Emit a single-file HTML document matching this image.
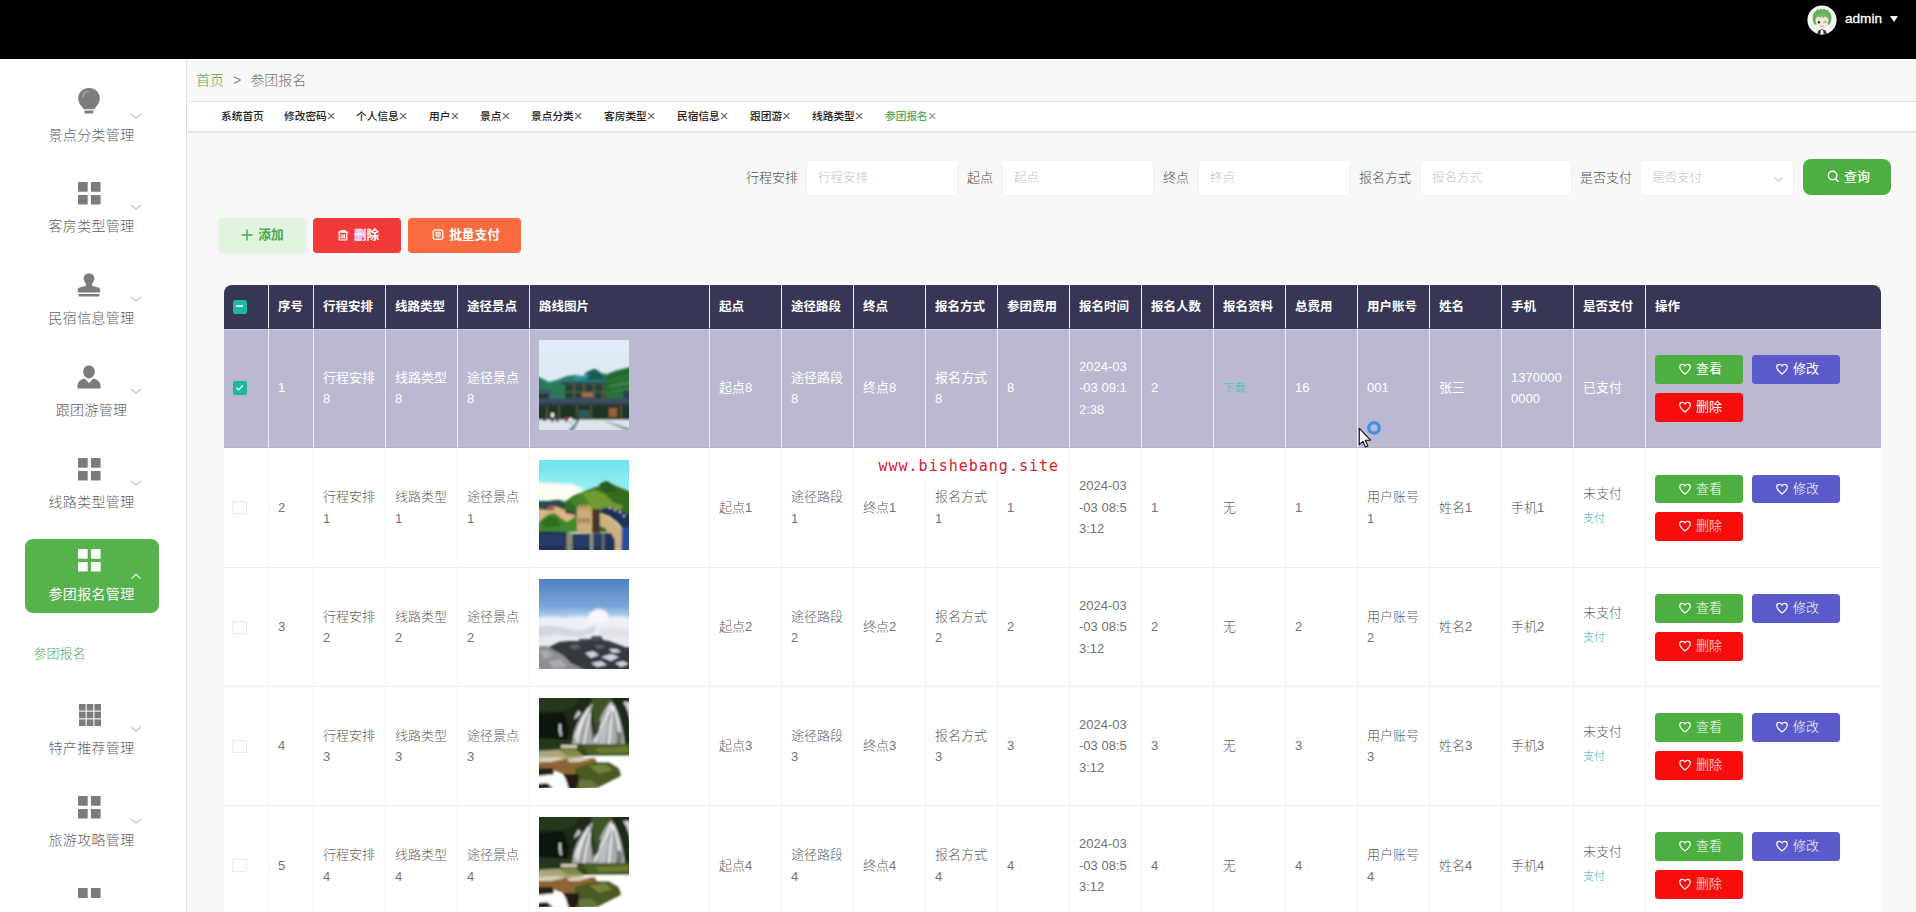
<!DOCTYPE html>
<html lang="zh-CN">
<head>
<meta charset="utf-8">
<title>参团报名</title>
<style>
*{box-sizing:border-box;margin:0;padding:0}
html,body{width:1916px;height:912px;overflow:hidden;background:#f8f8f8}
body{font-family:"Liberation Sans","Noto Sans CJK SC",sans-serif;font-size:13px;color:#606266;position:relative}
.hdr{position:absolute;left:0;top:0;width:1916px;height:59px;background:#000}
.ava{position:absolute;left:1807px;top:5px;width:30px;height:30px}
.adm{position:absolute;left:1845px;top:10px;color:#fff;font-size:13.6px;line-height:18px;-webkit-text-stroke:.3px #fff}
.tri{position:absolute;left:1889.5px;top:16px;width:0;height:0;border-left:4.5px solid transparent;border-right:4.5px solid transparent;border-top:6.5px solid #fff}
.side{position:absolute;left:0;top:59px;width:187px;height:853px;background:#fff;border-right:1px solid #e4e4e4}
.side .ic{position:absolute;margin-top:-59px}
.slabel{position:absolute;left:0;width:183px;text-align:center;font-size:14px;line-height:20px;color:#626262;font-weight:300;margin-top:-59px;letter-spacing:.35px}
.slabel.act{color:#fff;font-weight:400}
.actbox{position:absolute;left:25px;top:480px;width:134px;height:74px;background:#56b24c;border-radius:8px}
.chev{position:absolute;left:130px;width:12px;height:6px;margin-top:-59px}
.subitem{position:absolute;left:33.5px;font-size:13px;line-height:18px;color:#52ab4e;font-weight:300;margin-top:-59px}
.main{position:absolute;left:0;top:0;width:1916px;height:912px;pointer-events:none}
.bc{position:absolute;left:196px;top:70px;font-size:14px;line-height:20px;color:#747474;font-weight:300}
.bc .g{color:#4fa64f}
.bc .sep{margin:0 9px 0 9px;color:#888}
.tabs{position:absolute;left:187px;top:101px;width:1729px;height:30px;background:#fff;border-top:1px solid #e6e6e6;box-shadow:0 1px 2px rgba(0,0,0,.16)}
.tab{position:absolute;top:-1px;margin-left:4px;line-height:30px;font-size:10.7px;color:#222;white-space:nowrap;font-weight:500}
.tab i{font-style:normal;color:#666;font-weight:400;font-size:15px;margin-left:0;vertical-align:-1px;line-height:10px}
.tab.cur{color:#55a955}
.tab.cur i{color:#999}
.form{position:absolute;left:0;top:0}
.form label{position:absolute;top:160px;line-height:35px;font-size:13px;color:#4f4f4f;font-weight:300;white-space:nowrap}
.inp{position:absolute;top:161px;height:34px;background:#fff;border-radius:4px;color:#bfc1c7;font-weight:300;font-size:12.5px;line-height:34px;padding-left:11px;box-shadow:0 0 3px rgba(0,0,0,.06)}
.inp .sel{position:absolute;right:9px;top:15px;width:11px;height:7px}
.qbtn{position:absolute;left:1803px;top:159px;width:88px;height:36px;padding-left:3px;background:#4caf40;border-radius:8px;color:#fff;font-size:13px;line-height:35px;text-align:center;font-weight:500}
.qbtn svg{width:13px;height:13px;vertical-align:-2px;margin-right:4px}
.btn{position:absolute;top:218px;height:35px;border-radius:4px;color:#fff;font-size:12.7px;font-weight:700;line-height:34px;text-align:center;white-space:nowrap}
.btn svg{width:12px;height:12px;vertical-align:-1.5px;margin-right:5px}
.btn.add{left:219px;width:87px;background:#e2f3df;color:#4aa54a;box-shadow:0 0 4px rgba(0,0,0,.05)}
.btn.del{left:313px;width:88px;background:#f23a3a;padding-left:2px}
.btn.pay{left:408px;width:113px;background:#f96a3f;padding-left:3px}
.tw{position:absolute;left:224px;top:285px;width:1657px;height:640px;border-radius:8px 8px 0 0;overflow:hidden;background:#fff}
.tb{border-collapse:separate;border-spacing:0;table-layout:fixed;width:1657px}
.tb th{height:44px;background:#373655;color:#fff;font-size:12.5px;font-weight:700;text-align:left;border-right:1px solid #ebebf3;border-bottom:1px solid #373655;vertical-align:middle}
.tb th:last-child,.tb td:last-child{border-right:none}
.tb td{font-weight:300;border-right:1px solid #f4f4f6;border-bottom:1px solid #eeeeef;vertical-align:middle;color:#5e5e5e;font-size:13px}
.tb .c{padding:0 9px;line-height:21.5px;white-space:nowrap}
.tb th .c{line-height:20px}
.tb tr.sel td{background:#bab9d1;color:#fff;font-weight:400;box-shadow:inset 0 1px 0 #cbcae2;border-right-color:#eeeefc;border-bottom-color:#b3b2c9}
.cb{display:block;width:15px;height:13px;border:1px solid #e9e9ee;background:#fff;border-radius:1px;margin-left:8px}
.cb.ind,.cb.chk{width:14px;height:14px;margin-left:9px;border-radius:2px}
.cb.ind,.cb.chk{background:#1cb99a;border-color:#1cb99a;position:relative}
.cb.ind:after{content:"";position:absolute;left:2px;top:4.5px;width:7px;height:2px;background:#d8fff6}
.cb.chk svg{display:block;width:11px;height:11px}
.pic{display:block;width:90px;height:90px;margin-left:9px}
.tb td.imc{vertical-align:top;padding-top:11px}
.tb tr.r2 td.imc{padding-top:12px}
.tb td.opc{vertical-align:top;padding-top:26px}
.tb tr.r2 td.opc{padding-top:27px}
.tb tr.r2 .ob.g,.tb tr.r2 .ob.p{height:28px;line-height:27px}
.dl{color:#2fc7a6;font-size:11.5px;font-weight:300}
.pl{color:#2cb7a0;font-size:11px}
.c.pay{line-height:24px;margin-top:-4px}
.ops{padding-left:9px;width:235px;font-size:0;margin-top:0px}
.ob{display:inline-block;width:88px;height:29px;border-radius:3.5px;padding-left:2px;color:#fff;font-size:13px;line-height:28px;text-align:center;margin:0 9px 9px 0;vertical-align:top}
.ob .hrt{width:14px;height:14px;vertical-align:-2.5px;margin-right:4px}
.ob.g{background:#4caf40}
.ob.p{background:#5a5acb}
.ob.r{background:#f80d0d;margin-bottom:0}
.wm{position:absolute;left:872px;top:452.5px;padding:3px 6px 3px 6.5px;background:#fff;font-family:"DejaVu Sans Mono","Liberation Mono",monospace;font-size:15px;line-height:20px;color:#d42030;letter-spacing:1px;white-space:nowrap}
.cursor{position:absolute;left:1355px;top:418px;width:30px;height:30px}
.tb td .n{color:#727272}
.tb tr.sel td .n{color:#fff}

</style>
</head>
<body>
<svg width="0" height="0" style="position:absolute">
<defs>
<filter id="bl" filterUnits="userSpaceOnUse" x="-10" y="-10" width="110" height="110"><feGaussianBlur stdDeviation="0.9"/></filter>
<filter id="bl2" filterUnits="userSpaceOnUse" x="-10" y="-10" width="110" height="110"><feGaussianBlur stdDeviation="1.6"/></filter>
<clipPath id="cp"><rect width="90" height="90"/></clipPath>
<linearGradient id="sky1" x1="0" y1="0" x2="0" y2="1"><stop offset="0" stop-color="#e3ecf5"/><stop offset="1" stop-color="#cfe4ee"/></linearGradient>
<linearGradient id="sky2" x1="0" y1="0" x2="0" y2="1"><stop offset="0" stop-color="#6fe4ee"/><stop offset=".55" stop-color="#b5f3f1"/><stop offset="1" stop-color="#f4fbf2"/></linearGradient>
<linearGradient id="sky3" x1="0" y1="0" x2="0" y2="1"><stop offset="0" stop-color="#4f80be"/><stop offset=".3" stop-color="#7aa5d8"/><stop offset=".43" stop-color="#b6d4f1"/><stop offset="1" stop-color="#b6d4f1"/></linearGradient>
<g id="img1" clip-path="url(#cp)">
<rect width="90" height="90" fill="url(#sky1)"/>
<g filter="url(#bl)">
<path d="M-2 36 L4 39 L10 42 L18 40 L28 36 L36 35 L44 36 L50 31 L56 29 L62 33 L68 34 L76 31 L92 27 L92 80 L-2 80 Z" fill="#2a7d6e"/>
<path d="M46 33 L52 30 L56 29 L62 33 L66 40 L46 40 Z" fill="#1c5a58"/><path d="M36 36 L44 36 L50 33 L48 39 L36 40 Z" fill="#2f98a4"/>
<path d="M66 36 L76 31 L92 27 L92 62 L66 62 Z" fill="#2a7236"/>
<path d="M70 42 L92 36 L92 50 L72 52 Z" fill="#33803e"/><path d="M68 38 L92 30 M68 44 L92 38 M68 50 L92 46" stroke="#1f5a2c" stroke-width="1.4"/>
<path d="M-2 38 L8 43 L12 52 L-2 52 Z" fill="#2a7a5a"/>
<path d="M12 46 L26 40 L30 56 L12 56 Z" fill="#2b7a50"/>
<rect x="-2" y="49" width="14" height="6" fill="#3a5668"/>
<rect x="-2" y="54" width="12" height="8" fill="#23332c"/>
<path d="M22 42 L68 42 L66 45 L24 45 Z" fill="#2d4c55"/>
<rect x="26" y="45" width="40" height="15" fill="#26402f"/>
<rect x="26" y="51" width="40" height="2" fill="#3b5a52"/>
<rect x="43" y="53" width="11" height="4" fill="#b56a44"/>
<path d="M35 44 V60 M45 44 V60 M55 44 V60 M64 44 V60" stroke="#8a6a48" stroke-width="1"/>
<rect x="84" y="50" width="8" height="8" fill="#2d4250"/>
<path d="M-2 58 L92 58 L92 64 L-2 64 Z" fill="#3a4e63"/>
<rect x="-2" y="63.5" width="94" height="3" fill="#2b3a34"/>
<rect x="-2" y="66" width="94" height="14" fill="#1c3424"/>
<path d="M8 66 V79 M20 66 V79 M38 66 V79 M52 66 V79 M82 66 V79" stroke="#7a6a46" stroke-width="1.1"/>
<rect x="70" y="68" width="8" height="9" fill="#9a5e30"/>
<rect x="40" y="70" width="10" height="8" fill="#2d5a5a"/>
<rect x="-2" y="79.5" width="94" height="12" fill="#dde4ea"/>
<path d="M28 92 L38 80.5 L40 81 L34 92 Z" fill="#5a8ea0"/>
<path d="M62 79.5 L92 89 L92 91 L86 90 Z" fill="#7f8a94"/>
<path d="M4 76 h3 v5 h-3 Z M12 74 h2.6 v8 h-2.6 Z M17 75 h2.4 v7 h-2.4 Z M26 76 h2.4 v6 h-2.4 Z M30 77 h2.6 v6 h-2.6 Z M37 76 h2.6 v5 h-2.6 Z" fill="#3a3340"/>
<rect x="12" y="73" width="3" height="4" fill="#f2f2f2"/><rect x="30" y="78" width="3" height="4" fill="#eee"/><rect x="26" y="77" width="2" height="4" fill="#a02030"/>
</g></g>
<g id="img2" clip-path="url(#cp)">
<rect width="90" height="90" fill="url(#sky2)"/>
<path d="M-4 22 L34 24 L46 30 L30 40 L-4 42 Z" fill="#fdfcf2" filter="url(#bl2)"/>
<g filter="url(#bl)">
<path d="M-2 41 L10 41 L20 40 L26 42 L34 36 L44 32 L54 28 L60 26 L64 22 L68 21 L72 24 L80 27 L92 32 L92 72 L-2 72 Z" fill="#356c22"/>
<path d="M40 34 L56 30 L66 34 L74 42 L84 46 L80 52 L60 50 L44 46 Z" fill="#6f9a32"/>
<path d="M60 24 L68 21 L74 25 L78 32 L66 32 Z" fill="#2a5a1c"/>
<path d="M30 40 L44 34 L50 44 L38 48 Z" fill="#4b8429"/>
<path d="M-2 41 L10 41 L20 40 L27 44 L24 50 L-2 50 Z" fill="#2d4a4a"/>
<path d="M-2 49 L8 50 L12 46 L18 47 L26 50 L36 53 L36 66 L-2 62 Z" fill="#dcb684"/>
<path d="M8 47 L14 45 L16 50 L9 51 Z" fill="#a85a4a"/>
<path d="M26 50 L36 52 L36 55 L26 53 Z" fill="#3a3a4a"/>
<rect x="38" y="47" width="15" height="26" fill="#cdac7a"/>
<path d="M38 47 h2 v-2 h2 v2 h2 v-2 h2 v2 h2 v-2 h2 v2 h3 v3 h-15 Z" fill="#bfa070"/>
<path d="M41 58 v5 M45 58 v5 M49 58 v5" stroke="#3a2e22" stroke-width="1.2"/>
<rect x="53" y="49" width="8" height="24" fill="#4a3426"/>
<path d="M61 54 L70 57 L78 63 L83 72 L82 92 L74 92 L72 76 L66 68 L61 66 Z" fill="#cfb080"/>
<path d="M61 54 L70 57 L78 63 L83 70" stroke="#e8d2a8" stroke-width="1.6" fill="none"/>
<path d="M62 49 L70 47 L80 50 L92 56 L92 68 L84 68 L78 62 L70 56 L62 53 Z" fill="#1f2f5a"/>
<path d="M70 48 l2 0 M75 50 l2 0 M80 52 l2 0 M84 56 l2 0" stroke="#dfe6f2" stroke-width="1.4"/>
<path d="M83 68 L92 66 L92 92 L82 92 Z" fill="#27509e"/>
<path d="M-2 64 L4 58 L10 54 L16 53 L22 58 L28 62 L34 58 L37 56 L38 72 L-2 72 Z" fill="#3f8a2c"/>
<path d="M2 62 L10 56 L18 58 L22 66 L6 68 Z" fill="#2f6e24"/>
<path d="M-2 71 L28 72 L34 74 L72 73 L76 80 L76 92 L-2 92 Z" fill="#1e3159"/>
<path d="M0 76 h24 M0 80 h26 M0 84 h24 M36 77 h30 M36 81 h32 M36 85 h30" stroke="#3d5a8c" stroke-width="1"/>
<rect x="27.5" y="73" width="6" height="19" fill="#8d8c6a"/>
<rect x="51" y="74" width="3" height="18" fill="#9a927a"/>
<rect x="63" y="74" width="2.4" height="18" fill="#6a6a72"/>
</g></g>
<g id="img3" clip-path="url(#cp)">
<rect width="90" height="90" fill="url(#sky3)"/>
<g filter="url(#bl2)">
<path d="M-4 40 Q10 36 24 39 Q38 36 50 38 Q54 28 62 30 Q68 31 70 38 Q82 36 94 40 L94 70 L-4 70 Z" fill="#eef0f5"/>
<path d="M-4 48 Q14 44 30 50 Q44 54 56 46 L56 54 Q40 60 20 56 L-4 58 Z" fill="#d3d6de"/>
<path d="M50 34 Q60 29 68 34 L70 42 L48 44 Z" fill="#f6f7f9"/>
<path d="M60 50 Q76 46 94 52 L94 62 L60 62 Z" fill="#e0e2e8"/>
<path d="M-4 58 L94 58 L94 70 L-4 70 Z" fill="#e7e9ee"/>
</g>
<g filter="url(#bl)">
<path d="M-2 69 L4 67 L10 68 L14 66 L20 63 L30 62 L40 62 L44 60 L52 60 L53 57 L62 57 L64 61 L70 62 L78 65 L86 68 L92 69 L92 92 L-2 92 Z" fill="#34373d"/>
<path d="M-2 69 L4 67 L10 68 L16 72 L24 76 L32 84 L40 88 L48 92 L-2 92 Z" fill="#8b8e92"/>
<path d="M0 72 L8 71 L14 76 L6 80 Z M10 82 L22 80 L28 88 L14 90 Z" fill="#a9abae"/>
<path d="M53 57 h9 v4 h-9 Z" fill="#4a5663"/>
<path d="M40 60 h8 v3 h-8 Z" fill="#454b55"/>
<path d="M46 74 l8 -2 l6 4 l-8 3 Z M62 78 l10 -3 l8 3 l-8 4 Z M70 70 l8 0 l4 3 l-8 1 Z M52 84 l10 -2 l6 4 l-10 2 Z M76 84 l8 -2 l6 3 l-8 3 Z" fill="#cfd3da"/>
<path d="M30 66 l8 -1 l4 4 l-8 2 Z M56 66 l8 0 l2 3 l-8 1 Z" fill="#5c6068"/>
</g></g>
<g id="img4" clip-path="url(#cp)">
<rect width="90" height="90" fill="#fff"/>
<g filter="url(#bl)">
<rect x="-2" y="-2" width="94" height="52" fill="#1d2b19"/>
<path d="M-2 -2 L40 -2 L36 8 L20 14 L-2 12 Z" fill="#27391f"/>
<path d="M-2 16 L24 14 L30 30 L28 42 L-2 42 Z" fill="#0f150e"/>
<path d="M52 -2 L72 -2 L74 6 L70 16 L62 28 L56 30 L54 16 Z" fill="#3c5528"/>
<path d="M52 6 Q40 18 35 34 L33 46 L53 47 Q54 36 52 26 Q51 14 54 6 Z" fill="#a6a8aa"/><path d="M50 10 Q42 24 38 44 M51 16 Q47 30 45 46 M46 16 Q40 28 36 40" stroke="#eeeeef" stroke-width="1.6" fill="none"/><path d="M49 18 Q45 30 42 46" stroke="#8d8f90" stroke-width="1.2" fill="none"/>
<path d="M40 12 Q36 16 35 22 L42 16 Z" fill="#c0c2c4"/>
<path d="M72 3 Q62 14 58 30 Q54 38 52 47 L86 47 Q84 30 80 18 Q77 8 72 3 Z" fill="#a9abad"/><path d="M72 6 Q66 20 62 44 M73 8 Q72 26 70 46 M74 8 Q80 24 82 44 M70 14 Q62 28 56 44" stroke="#f0f0f1" stroke-width="1.8" fill="none"/><path d="M72 14 Q69 30 66 46 M75 14 Q78 30 78 46" stroke="#909294" stroke-width="1.3" fill="none"/>
<path d="M66 22 Q60 34 60 46 L66 46 Q68 34 70 26 Z" fill="#b9bcc0"/>
<path d="M78 34 Q80 40 76 47 L82 47 Q84 40 82 34 Z" fill="#6e7a6a"/>
<path d="M84 4 Q90 12 92 28 L92 4 Z" fill="#cfd1d3"/>
<path d="M20 26 Q19 32 21 38 L23 38 Q22 32 22 26 Z" fill="#c9cbcc"/>
<path d="M55 30 Q58 24 62 22 L60 34 L56 40 Z" fill="#3a4a30"/>
<rect x="-2" y="46" width="94" height="12" fill="#35491e"/>
<path d="M44 47 L92 46 L92 58 L50 58 Z" fill="#4b6025"/><path d="M56 50 L88 49 L90 54 L60 55 Z" fill="#6b7c30"/>
<path d="M-2 40 L30 42 L36 50 L-2 52 Z" fill="#26381e"/>
<path d="M22 47 L38 47 L38 50 L22 50 Z" fill="#d6c8b4"/>
<path d="M-2 53 L36 51 L44 58 L42 63 L-2 63 Z" fill="#aaa57a"/>
<path d="M20 52 L36 51 L42 58 L28 58 Z" fill="#7f8a4a"/>
<path d="M44 59 L92 58 L92 72 L60 70 L50 64 Z" fill="#ffffff"/>
<path d="M-2 61 L20 62 L30 60 L56 60 L58 64 L52 74 L40 78 L24 76 L14 72 L-2 74 Z" fill="#8d6536"/>
<path d="M-2 60 L18 59 L26 61 L12 64 L-2 64 Z M28 61 L44 59 L52 61 L40 64 L30 64 Z" fill="#d8ceb8"/>
<path d="M-2 70 L14 70 L15 78 L4 80 L-2 78 Z" fill="#2a2218"/>
<path d="M-2 78 L20 76 L28 82 L30 92 L-2 92 Z" fill="#fdfdfd"/>
<path d="M36 70 L56 64 L70 64 L80 70 L82 78 L70 84 L58 90 L36 92 Z" fill="#485a22"/>
<path d="M50 68 L66 66 L74 72 L60 76 Z" fill="#74823a"/>
<path d="M38 82 L52 82 L60 88 L42 92 Z" fill="#66763a"/>
<path d="M24 76 L40 76 L40 84 L36 92 L30 92 L27 82 Z" fill="#241f16"/>
<path d="M-2 86 L8 85 L14 90 L-2 92 Z" fill="#1c1c1a"/>
</g>
<path d="M66 90 L92 74 L92 92 L66 92 Z" fill="#fff" filter="url(#bl2)"/>
</g>
</defs>
</svg>

<div class="hdr">
<svg class="ava" viewBox="0 0 30 30"><defs><clipPath id="avc"><circle cx="15" cy="15" r="14.6"/></clipPath></defs><circle cx="15" cy="15" r="14.6" fill="#f2f7ef"/><g clip-path="url(#avc)"><path d="M6.2 17 C4.8 12 6 7.2 9.4 5.6 L10.4 4 L12 5 L13.6 3.4 L15.4 4.8 L17.4 3.6 L18.8 5.2 L20.8 4.8 L21.4 6.6 C24.4 8.4 25.2 12.6 23.8 17 L22.6 19.6 L7.4 19.6 Z" fill="#6bab63"/><path d="M8.6 14.4 C8.6 10.8 11.4 9.2 15 9.2 C18.6 9.2 21.4 10.8 21.4 14.4 C21.4 19.6 18.6 23.6 15 23.6 C11.4 23.6 8.6 19.6 8.6 14.4 Z" fill="#f3e6d2"/><path d="M8.2 15 C8.4 10.6 10.6 8 15 8 C19.4 8 21.6 10.6 21.8 15 C20.6 12.4 19.4 11.6 17.6 11.4 L16.4 13.2 L14.8 11.2 L12.8 13 L11.8 11.6 C10 12 9 13 8.2 15 Z" fill="#77b66c"/><ellipse cx="11.9" cy="17.3" rx="1.1" ry="1.3" fill="#2c2c2c"/><path d="M16.6 17.2 Q18 16.4 19.4 17.2" stroke="#6b5a4a" stroke-width=".8" fill="none"/><path d="M13.4 21 Q15 21.8 16.6 21" stroke="#c79a86" stroke-width=".6" fill="none"/><path d="M9.6 30 L11.4 25.6 L15 24 L18.6 25.6 L20.4 30 Z" fill="#3b3b3b"/><path d="M13.4 30 L13.8 25.4 L15 24.4 L16.2 25.4 L16.6 30 Z" fill="#fafafa"/></g></svg>
<span class="adm">admin</span><span class="tri"></span>
</div>
<div class="side">
<svg class="ic" style="width:24px;height:28px;left:77px;top:87px" viewBox="0 0 24 28"><path d="M12 1 C5.8 1 1.2 5.6 1.2 11.4 C1.2 15.3 3.4 17.6 5.4 20.2 L6.6 22.2 L17.4 22.2 L18.6 20.2 C20.6 17.6 22.8 15.3 22.8 11.4 C22.8 5.6 18.2 1 12 1 Z M7.5 23.6 H16.5 V25.4 Q16.5 26.6 15.3 26.6 H8.7 Q7.5 26.6 7.5 25.4 Z" fill="#7c7c7c"/><path d="M6 10 C6 6.5 8.5 4.5 11 4.3" stroke="#a5a5a5" stroke-width="1.6" fill="none" stroke-linecap="round"/></svg>
<div class="slabel" style="top:125px">景点分类管理</div>
<svg class="chev" style="top:113px" viewBox="0 0 12 6"><path d="M1 1 L6 5 L11 1" fill="none" stroke="#c4c4c4" stroke-width="1.2"/></svg>
<svg class="ic" style="width:22.6px;height:22.6px;left:78.4px;top:182px" viewBox="0 0 22.6 22.6"><rect x="0" y="0" width="9.7" height="9.7" rx=".6" fill="#7c7c7c"/><rect x="12.9" y="0" width="9.7" height="9.7" rx=".6" fill="#7c7c7c"/><rect x="0" y="12.9" width="9.7" height="9.7" rx=".6" fill="#7c7c7c"/><rect x="12.9" y="12.9" width="9.7" height="9.7" rx=".6" fill="#7c7c7c"/></svg>
<div class="slabel" style="top:216px">客房类型管理</div>
<svg class="chev" style="top:204px" viewBox="0 0 12 6"><path d="M1 1 L6 5 L11 1" fill="none" stroke="#c4c4c4" stroke-width="1.2"/></svg>
<svg class="ic" style="width:24px;height:24px;left:77px;top:273px" viewBox="0 0 24 24"><path d="M12 0.5 C8.8 0.5 6.6 2.8 6.6 5.6 C6.6 7.6 7.6 8.8 8.6 10.2 C9.2 11.2 9.2 12.4 8.4 13 L2.6 14.6 C1.4 15 0.8 15.8 0.8 17 V19.4 H23.2 V17 C23.2 15.8 22.6 15 21.4 14.6 L15.6 13 C14.8 12.4 14.8 11.2 15.4 10.2 C16.4 8.8 17.4 7.6 17.4 5.6 C17.4 2.8 15.2 0.5 12 0.5 Z M1.6 21 H22.4 V23.4 H1.6 Z" fill="#7c7c7c"/></svg>
<div class="slabel" style="top:308px">民宿信息管理</div>
<svg class="chev" style="top:296px" viewBox="0 0 12 6"><path d="M1 1 L6 5 L11 1" fill="none" stroke="#c4c4c4" stroke-width="1.2"/></svg>
<svg class="ic" style="width:24px;height:24px;left:77px;top:365px" viewBox="0 0 24 24"><path d="M12 0.5 C8.6 0.5 6.2 3.1 6.2 6.6 C6.2 10.2 8.8 13.4 12 13.4 C15.2 13.4 17.8 10.2 17.8 6.6 C17.8 3.1 15.4 0.5 12 0.5 Z M7.6 13.6 L12 18 L16.4 13.6 C20.6 14.6 23.6 17.4 23.6 21.4 V23.5 H0.4 V21.4 C0.4 17.4 3.4 14.6 7.6 13.6 Z" fill="#7c7c7c"/></svg>
<div class="slabel" style="top:400px">跟团游管理</div>
<svg class="chev" style="top:388px" viewBox="0 0 12 6"><path d="M1 1 L6 5 L11 1" fill="none" stroke="#c4c4c4" stroke-width="1.2"/></svg>
<svg class="ic" style="width:22.6px;height:22.6px;left:78.4px;top:458px" viewBox="0 0 22.6 22.6"><rect x="0" y="0" width="9.7" height="9.7" rx=".6" fill="#7c7c7c"/><rect x="12.9" y="0" width="9.7" height="9.7" rx=".6" fill="#7c7c7c"/><rect x="0" y="12.9" width="9.7" height="9.7" rx=".6" fill="#7c7c7c"/><rect x="12.9" y="12.9" width="9.7" height="9.7" rx=".6" fill="#7c7c7c"/></svg>
<div class="slabel" style="top:492px">线路类型管理</div>
<svg class="chev" style="top:480px" viewBox="0 0 12 6"><path d="M1 1 L6 5 L11 1" fill="none" stroke="#c4c4c4" stroke-width="1.2"/></svg>
<div class="actbox"></div>
<svg class="ic" style="width:22.6px;height:22.6px;left:78.4px;top:549px" viewBox="0 0 22.6 22.6"><rect x="0" y="0" width="9.7" height="9.7" rx=".6" fill="#ffffff"/><rect x="12.9" y="0" width="9.7" height="9.7" rx=".6" fill="#ffffff"/><rect x="0" y="12.9" width="9.7" height="9.7" rx=".6" fill="#ffffff"/><rect x="12.9" y="12.9" width="9.7" height="9.7" rx=".6" fill="#ffffff"/></svg>
<div class="slabel act" style="top:584px">参团报名管理</div>
<svg class="chev" style="top:573px" viewBox="0 0 12 6"><path d="M1.5 5.4 L6 1.4 L10.5 5.4" fill="none" stroke="#d8f0d8" stroke-width="1.3"/></svg>
<div class="subitem" style="top:645px">参团报名</div>
<svg class="ic" style="width:22px;height:22px;left:79px;top:704px" viewBox="0 0 22 22"><g fill="#7c7c7c"><rect x="0" y="0" width="6.6" height="6.6"/><rect x="7.7" y="0" width="6.6" height="6.6"/><rect x="15.4" y="0" width="6.6" height="6.6"/><rect x="0" y="7.7" width="6.6" height="6.6"/><rect x="7.7" y="7.7" width="6.6" height="6.6"/><rect x="15.4" y="7.7" width="6.6" height="6.6"/><rect x="0" y="15.4" width="6.6" height="6.6"/><rect x="7.7" y="15.4" width="6.6" height="6.6"/><rect x="15.4" y="15.4" width="6.6" height="6.6"/></g></svg>
<div class="slabel" style="top:738px">特产推荐管理</div>
<svg class="chev" style="top:726px" viewBox="0 0 12 6"><path d="M1 1 L6 5 L11 1" fill="none" stroke="#c4c4c4" stroke-width="1.2"/></svg>
<svg class="ic" style="width:22.6px;height:22.6px;left:78.4px;top:796px" viewBox="0 0 22.6 22.6"><rect x="0" y="0" width="9.7" height="9.7" rx=".6" fill="#7c7c7c"/><rect x="12.9" y="0" width="9.7" height="9.7" rx=".6" fill="#7c7c7c"/><rect x="0" y="12.9" width="9.7" height="9.7" rx=".6" fill="#7c7c7c"/><rect x="12.9" y="12.9" width="9.7" height="9.7" rx=".6" fill="#7c7c7c"/></svg>
<div class="slabel" style="top:830px">旅游攻略管理</div>
<svg class="chev" style="top:818px" viewBox="0 0 12 6"><path d="M1 1 L6 5 L11 1" fill="none" stroke="#c4c4c4" stroke-width="1.2"/></svg>
<svg class="ic" style="width:22.6px;height:10px;left:78.4px;top:888px" viewBox="0 0 22.6 10"><rect x="0" y="0" width="9.7" height="10" rx=".6" fill="#7c7c7c"/><rect x="12.9" y="0" width="9.7" height="10" rx=".6" fill="#7c7c7c"/></svg>
</div>
<div class="main">
<div class="bc"><span class="g">首页</span><span class="sep">&gt;</span><span>参团报名</span></div>
<div class="tabs"><span class="tab" style="left:30px">系统首页</span><span class="tab" style="left:93px">修改密码<i>×</i></span><span class="tab" style="left:165px">个人信息<i>×</i></span><span class="tab" style="left:238px">用户<i>×</i></span><span class="tab" style="left:289px">景点<i>×</i></span><span class="tab" style="left:340px">景点分类<i>×</i></span><span class="tab" style="left:413px">客房类型<i>×</i></span><span class="tab" style="left:486px">民宿信息<i>×</i></span><span class="tab" style="left:559px">跟团游<i>×</i></span><span class="tab" style="left:621px">线路类型<i>×</i></span><span class="tab cur" style="left:694px">参团报名<i>×</i></span></div>
<div class="form">
<label style="left:746px">行程安排</label><div class="inp" style="left:807px;width:150px">行程安排</div>
<label style="left:967px">起点</label><div class="inp" style="left:1003px;width:150px">起点</div>
<label style="left:1163px">终点</label><div class="inp" style="left:1199px;width:150px">终点</div>
<label style="left:1359px">报名方式</label><div class="inp" style="left:1421px;width:150px">报名方式</div>
<label style="left:1580px">是否支付</label><div class="inp" style="left:1641px;width:152px">是否支付<svg class="sel" viewBox="0 0 12 8"><path d="M1.5 1.5 L6 6 L10.5 1.5" fill="none" stroke="#c0c4cc" stroke-width="1.2"/></svg></div>
<div class="qbtn"><svg viewBox="0 0 14 14"><circle cx="6" cy="6" r="4.6" fill="none" stroke="#fff" stroke-width="1.5"/><path d="M9.4 9.6 L12 12.4" stroke="#fff" stroke-width="1.6" stroke-linecap="round"/></svg>查询</div>
</div>
<div class="btn add"><svg viewBox="0 0 12 12"><path d="M6 0.5 V11.5 M0.5 6 H11.5" stroke="#4aa54a" stroke-width="1.4"/></svg>添加</div>
<div class="btn del"><svg viewBox="0 0 12 12"><path d="M1 3.2 H11 M4 3 V1.6 H8 V3 M2.2 3.4 V11 H9.8 V3.4 M4.4 5.2 V9.4 M6 5.2 V9.4 M7.6 5.2 V9.4" fill="none" stroke="#fff" stroke-width="1.2"/></svg>删除</div>
<div class="btn pay"><svg viewBox="0 0 12 12"><rect x="1.2" y="0.8" width="9.6" height="9.6" rx="2.4" fill="none" stroke="#fff" stroke-width="1.3"/><path d="M4 3.2 H8 V7 H4 Z M6 3.2 V9" fill="none" stroke="#fff" stroke-width="1.1"/></svg>批量支付</div>
<div class="tw"><table class="tb"><colgroup><col style="width:45px"><col style="width:45px"><col style="width:72px"><col style="width:72px"><col style="width:72px"><col style="width:180px"><col style="width:72px"><col style="width:72px"><col style="width:72px"><col style="width:72px"><col style="width:72px"><col style="width:72px"><col style="width:72px"><col style="width:72px"><col style="width:72px"><col style="width:72px"><col style="width:72px"><col style="width:72px"><col style="width:72px"><col style="width:235px"></colgroup><thead><tr><th><span class="cb ind"></span></th><th><div class="c">序号</div></th><th><div class="c">行程安排</div></th><th><div class="c">线路类型</div></th><th><div class="c">途径景点</div></th><th><div class="c">路线图片</div></th><th><div class="c">起点</div></th><th><div class="c">途径路段</div></th><th><div class="c">终点</div></th><th><div class="c">报名方式</div></th><th><div class="c">参团费用</div></th><th><div class="c">报名时间</div></th><th><div class="c">报名人数</div></th><th><div class="c">报名资料</div></th><th><div class="c">总费用</div></th><th><div class="c">用户账号</div></th><th><div class="c">姓名</div></th><th><div class="c">手机</div></th><th><div class="c">是否支付</div></th><th><div class="c">操作</div></th></tr></thead><tbody><tr class="sel r1" style="height:119px"><td><span class="cb chk"><svg viewBox="0 0 12 12"><path d="M2.6 6.2 L5 8.6 L9.6 3.8" fill="none" stroke="#fff" stroke-width="1.5"/></svg></span></td><td><div class="c"><span class="n">1</span></div></td><td><div class="c">行程安排<br><span class="n">8</span></div></td><td><div class="c">线路类型<br><span class="n">8</span></div></td><td><div class="c">途径景点<br><span class="n">8</span></div></td><td class="imc"><svg class="pic" viewBox="0 0 90 90"><use href="#img1"/></svg></td><td><div class="c">起点<span class="n">8</span></div></td><td><div class="c">途径路段<br><span class="n">8</span></div></td><td><div class="c">终点<span class="n">8</span></div></td><td><div class="c">报名方式<br><span class="n">8</span></div></td><td><div class="c"><span class="n">8</span></div></td><td><div class="c tm"><span class="n">2024-03</span><br><span class="n">-03</span> <span class="n">09:1</span><br><span class="n">2:38</span></div></td><td><div class="c"><span class="n">2</span></div></td><td><div class="c"><span class="dl">下载</span></div></td><td><div class="c"><span class="n">16</span></div></td><td><div class="c"><span class="n">001</span></div></td><td><div class="c">张三</div></td><td><div class="c"><span class="n">1370000</span><br><span class="n">0000</span></div></td><td><div class="c">已支付</div></td><td class="opc"><div class="ops"><span class="ob g"><svg class="hrt" viewBox="0 0 24 24"><path d="M12 20.5 C5 15 3 11.5 3 8.5 C3 5.8 5 4 7.4 4 C9.3 4 11 5.1 12 7 C13 5.1 14.7 4 16.6 4 C19 4 21 5.8 21 8.5 C21 11.5 19 15 12 20.5 Z" fill="none" stroke="currentColor" stroke-width="2" stroke-linejoin="round"/></svg>查看</span><span class="ob p"><svg class="hrt" viewBox="0 0 24 24"><path d="M12 20.5 C5 15 3 11.5 3 8.5 C3 5.8 5 4 7.4 4 C9.3 4 11 5.1 12 7 C13 5.1 14.7 4 16.6 4 C19 4 21 5.8 21 8.5 C21 11.5 19 15 12 20.5 Z" fill="none" stroke="currentColor" stroke-width="2" stroke-linejoin="round"/></svg>修改</span><span class="ob r"><svg class="hrt" viewBox="0 0 24 24"><path d="M12 20.5 C5 15 3 11.5 3 8.5 C3 5.8 5 4 7.4 4 C9.3 4 11 5.1 12 7 C13 5.1 14.7 4 16.6 4 C19 4 21 5.8 21 8.5 C21 11.5 19 15 12 20.5 Z" fill="none" stroke="currentColor" stroke-width="2" stroke-linejoin="round"/></svg>删除</span></div></td></tr><tr class=" r2" style="height:120px"><td><span class="cb"></span></td><td><div class="c"><span class="n">2</span></div></td><td><div class="c">行程安排<br><span class="n">1</span></div></td><td><div class="c">线路类型<br><span class="n">1</span></div></td><td><div class="c">途径景点<br><span class="n">1</span></div></td><td class="imc"><svg class="pic" viewBox="0 0 90 90"><use href="#img2"/></svg></td><td><div class="c">起点<span class="n">1</span></div></td><td><div class="c">途径路段<br><span class="n">1</span></div></td><td><div class="c">终点<span class="n">1</span></div></td><td><div class="c">报名方式<br><span class="n">1</span></div></td><td><div class="c"><span class="n">1</span></div></td><td><div class="c tm"><span class="n">2024-03</span><br><span class="n">-03</span> <span class="n">08:5</span><br><span class="n">3:12</span></div></td><td><div class="c"><span class="n">1</span></div></td><td><div class="c">无</div></td><td><div class="c"><span class="n">1</span></div></td><td><div class="c">用户账号<br><span class="n">1</span></div></td><td><div class="c">姓名<span class="n">1</span></div></td><td><div class="c">手机<span class="n">1</span></div></td><td><div class="c pay">未支付<br><span class="pl">支付</span></div></td><td class="opc"><div class="ops"><span class="ob g"><svg class="hrt" viewBox="0 0 24 24"><path d="M12 20.5 C5 15 3 11.5 3 8.5 C3 5.8 5 4 7.4 4 C9.3 4 11 5.1 12 7 C13 5.1 14.7 4 16.6 4 C19 4 21 5.8 21 8.5 C21 11.5 19 15 12 20.5 Z" fill="none" stroke="currentColor" stroke-width="2" stroke-linejoin="round"/></svg>查看</span><span class="ob p"><svg class="hrt" viewBox="0 0 24 24"><path d="M12 20.5 C5 15 3 11.5 3 8.5 C3 5.8 5 4 7.4 4 C9.3 4 11 5.1 12 7 C13 5.1 14.7 4 16.6 4 C19 4 21 5.8 21 8.5 C21 11.5 19 15 12 20.5 Z" fill="none" stroke="currentColor" stroke-width="2" stroke-linejoin="round"/></svg>修改</span><span class="ob r"><svg class="hrt" viewBox="0 0 24 24"><path d="M12 20.5 C5 15 3 11.5 3 8.5 C3 5.8 5 4 7.4 4 C9.3 4 11 5.1 12 7 C13 5.1 14.7 4 16.6 4 C19 4 21 5.8 21 8.5 C21 11.5 19 15 12 20.5 Z" fill="none" stroke="currentColor" stroke-width="2" stroke-linejoin="round"/></svg>删除</span></div></td></tr><tr class=" r3" style="height:119px"><td><span class="cb"></span></td><td><div class="c"><span class="n">3</span></div></td><td><div class="c">行程安排<br><span class="n">2</span></div></td><td><div class="c">线路类型<br><span class="n">2</span></div></td><td><div class="c">途径景点<br><span class="n">2</span></div></td><td class="imc"><svg class="pic" viewBox="0 0 90 90"><use href="#img3"/></svg></td><td><div class="c">起点<span class="n">2</span></div></td><td><div class="c">途径路段<br><span class="n">2</span></div></td><td><div class="c">终点<span class="n">2</span></div></td><td><div class="c">报名方式<br><span class="n">2</span></div></td><td><div class="c"><span class="n">2</span></div></td><td><div class="c tm"><span class="n">2024-03</span><br><span class="n">-03</span> <span class="n">08:5</span><br><span class="n">3:12</span></div></td><td><div class="c"><span class="n">2</span></div></td><td><div class="c">无</div></td><td><div class="c"><span class="n">2</span></div></td><td><div class="c">用户账号<br><span class="n">2</span></div></td><td><div class="c">姓名<span class="n">2</span></div></td><td><div class="c">手机<span class="n">2</span></div></td><td><div class="c pay">未支付<br><span class="pl">支付</span></div></td><td class="opc"><div class="ops"><span class="ob g"><svg class="hrt" viewBox="0 0 24 24"><path d="M12 20.5 C5 15 3 11.5 3 8.5 C3 5.8 5 4 7.4 4 C9.3 4 11 5.1 12 7 C13 5.1 14.7 4 16.6 4 C19 4 21 5.8 21 8.5 C21 11.5 19 15 12 20.5 Z" fill="none" stroke="currentColor" stroke-width="2" stroke-linejoin="round"/></svg>查看</span><span class="ob p"><svg class="hrt" viewBox="0 0 24 24"><path d="M12 20.5 C5 15 3 11.5 3 8.5 C3 5.8 5 4 7.4 4 C9.3 4 11 5.1 12 7 C13 5.1 14.7 4 16.6 4 C19 4 21 5.8 21 8.5 C21 11.5 19 15 12 20.5 Z" fill="none" stroke="currentColor" stroke-width="2" stroke-linejoin="round"/></svg>修改</span><span class="ob r"><svg class="hrt" viewBox="0 0 24 24"><path d="M12 20.5 C5 15 3 11.5 3 8.5 C3 5.8 5 4 7.4 4 C9.3 4 11 5.1 12 7 C13 5.1 14.7 4 16.6 4 C19 4 21 5.8 21 8.5 C21 11.5 19 15 12 20.5 Z" fill="none" stroke="currentColor" stroke-width="2" stroke-linejoin="round"/></svg>删除</span></div></td></tr><tr class=" r4" style="height:119px"><td><span class="cb"></span></td><td><div class="c"><span class="n">4</span></div></td><td><div class="c">行程安排<br><span class="n">3</span></div></td><td><div class="c">线路类型<br><span class="n">3</span></div></td><td><div class="c">途径景点<br><span class="n">3</span></div></td><td class="imc"><svg class="pic" viewBox="0 0 90 90"><use href="#img4"/></svg></td><td><div class="c">起点<span class="n">3</span></div></td><td><div class="c">途径路段<br><span class="n">3</span></div></td><td><div class="c">终点<span class="n">3</span></div></td><td><div class="c">报名方式<br><span class="n">3</span></div></td><td><div class="c"><span class="n">3</span></div></td><td><div class="c tm"><span class="n">2024-03</span><br><span class="n">-03</span> <span class="n">08:5</span><br><span class="n">3:12</span></div></td><td><div class="c"><span class="n">3</span></div></td><td><div class="c">无</div></td><td><div class="c"><span class="n">3</span></div></td><td><div class="c">用户账号<br><span class="n">3</span></div></td><td><div class="c">姓名<span class="n">3</span></div></td><td><div class="c">手机<span class="n">3</span></div></td><td><div class="c pay">未支付<br><span class="pl">支付</span></div></td><td class="opc"><div class="ops"><span class="ob g"><svg class="hrt" viewBox="0 0 24 24"><path d="M12 20.5 C5 15 3 11.5 3 8.5 C3 5.8 5 4 7.4 4 C9.3 4 11 5.1 12 7 C13 5.1 14.7 4 16.6 4 C19 4 21 5.8 21 8.5 C21 11.5 19 15 12 20.5 Z" fill="none" stroke="currentColor" stroke-width="2" stroke-linejoin="round"/></svg>查看</span><span class="ob p"><svg class="hrt" viewBox="0 0 24 24"><path d="M12 20.5 C5 15 3 11.5 3 8.5 C3 5.8 5 4 7.4 4 C9.3 4 11 5.1 12 7 C13 5.1 14.7 4 16.6 4 C19 4 21 5.8 21 8.5 C21 11.5 19 15 12 20.5 Z" fill="none" stroke="currentColor" stroke-width="2" stroke-linejoin="round"/></svg>修改</span><span class="ob r"><svg class="hrt" viewBox="0 0 24 24"><path d="M12 20.5 C5 15 3 11.5 3 8.5 C3 5.8 5 4 7.4 4 C9.3 4 11 5.1 12 7 C13 5.1 14.7 4 16.6 4 C19 4 21 5.8 21 8.5 C21 11.5 19 15 12 20.5 Z" fill="none" stroke="currentColor" stroke-width="2" stroke-linejoin="round"/></svg>删除</span></div></td></tr><tr class=" r5" style="height:120px"><td><span class="cb"></span></td><td><div class="c"><span class="n">5</span></div></td><td><div class="c">行程安排<br><span class="n">4</span></div></td><td><div class="c">线路类型<br><span class="n">4</span></div></td><td><div class="c">途径景点<br><span class="n">4</span></div></td><td class="imc"><svg class="pic" viewBox="0 0 90 90"><use href="#img4"/></svg></td><td><div class="c">起点<span class="n">4</span></div></td><td><div class="c">途径路段<br><span class="n">4</span></div></td><td><div class="c">终点<span class="n">4</span></div></td><td><div class="c">报名方式<br><span class="n">4</span></div></td><td><div class="c"><span class="n">4</span></div></td><td><div class="c tm"><span class="n">2024-03</span><br><span class="n">-03</span> <span class="n">08:5</span><br><span class="n">3:12</span></div></td><td><div class="c"><span class="n">4</span></div></td><td><div class="c">无</div></td><td><div class="c"><span class="n">4</span></div></td><td><div class="c">用户账号<br><span class="n">4</span></div></td><td><div class="c">姓名<span class="n">4</span></div></td><td><div class="c">手机<span class="n">4</span></div></td><td><div class="c pay">未支付<br><span class="pl">支付</span></div></td><td class="opc"><div class="ops"><span class="ob g"><svg class="hrt" viewBox="0 0 24 24"><path d="M12 20.5 C5 15 3 11.5 3 8.5 C3 5.8 5 4 7.4 4 C9.3 4 11 5.1 12 7 C13 5.1 14.7 4 16.6 4 C19 4 21 5.8 21 8.5 C21 11.5 19 15 12 20.5 Z" fill="none" stroke="currentColor" stroke-width="2" stroke-linejoin="round"/></svg>查看</span><span class="ob p"><svg class="hrt" viewBox="0 0 24 24"><path d="M12 20.5 C5 15 3 11.5 3 8.5 C3 5.8 5 4 7.4 4 C9.3 4 11 5.1 12 7 C13 5.1 14.7 4 16.6 4 C19 4 21 5.8 21 8.5 C21 11.5 19 15 12 20.5 Z" fill="none" stroke="currentColor" stroke-width="2" stroke-linejoin="round"/></svg>修改</span><span class="ob r"><svg class="hrt" viewBox="0 0 24 24"><path d="M12 20.5 C5 15 3 11.5 3 8.5 C3 5.8 5 4 7.4 4 C9.3 4 11 5.1 12 7 C13 5.1 14.7 4 16.6 4 C19 4 21 5.8 21 8.5 C21 11.5 19 15 12 20.5 Z" fill="none" stroke="currentColor" stroke-width="2" stroke-linejoin="round"/></svg>删除</span></div></td></tr></tbody></table></div>
</div>
<div class="wm">www.bishebang.site</div>
<svg class="cursor" viewBox="0 0 30 30"><defs><filter id="cb" x="-30%" y="-30%" width="160%" height="160%"><feGaussianBlur stdDeviation=".55"/></filter></defs><circle cx="19" cy="9.9" r="5.2" fill="none" stroke="#3f8fe4" stroke-width="3.3" filter="url(#cb)"/><path d="M4.3 10.4 L4.3 26.6 L7.9 23.3 L10.5 29 L12.9 27.9 L10.3 22.3 L15.5 22.1 Z" fill="#fff" stroke="#111" stroke-width="1.1" stroke-linejoin="round"/></svg>
</body>
</html>
